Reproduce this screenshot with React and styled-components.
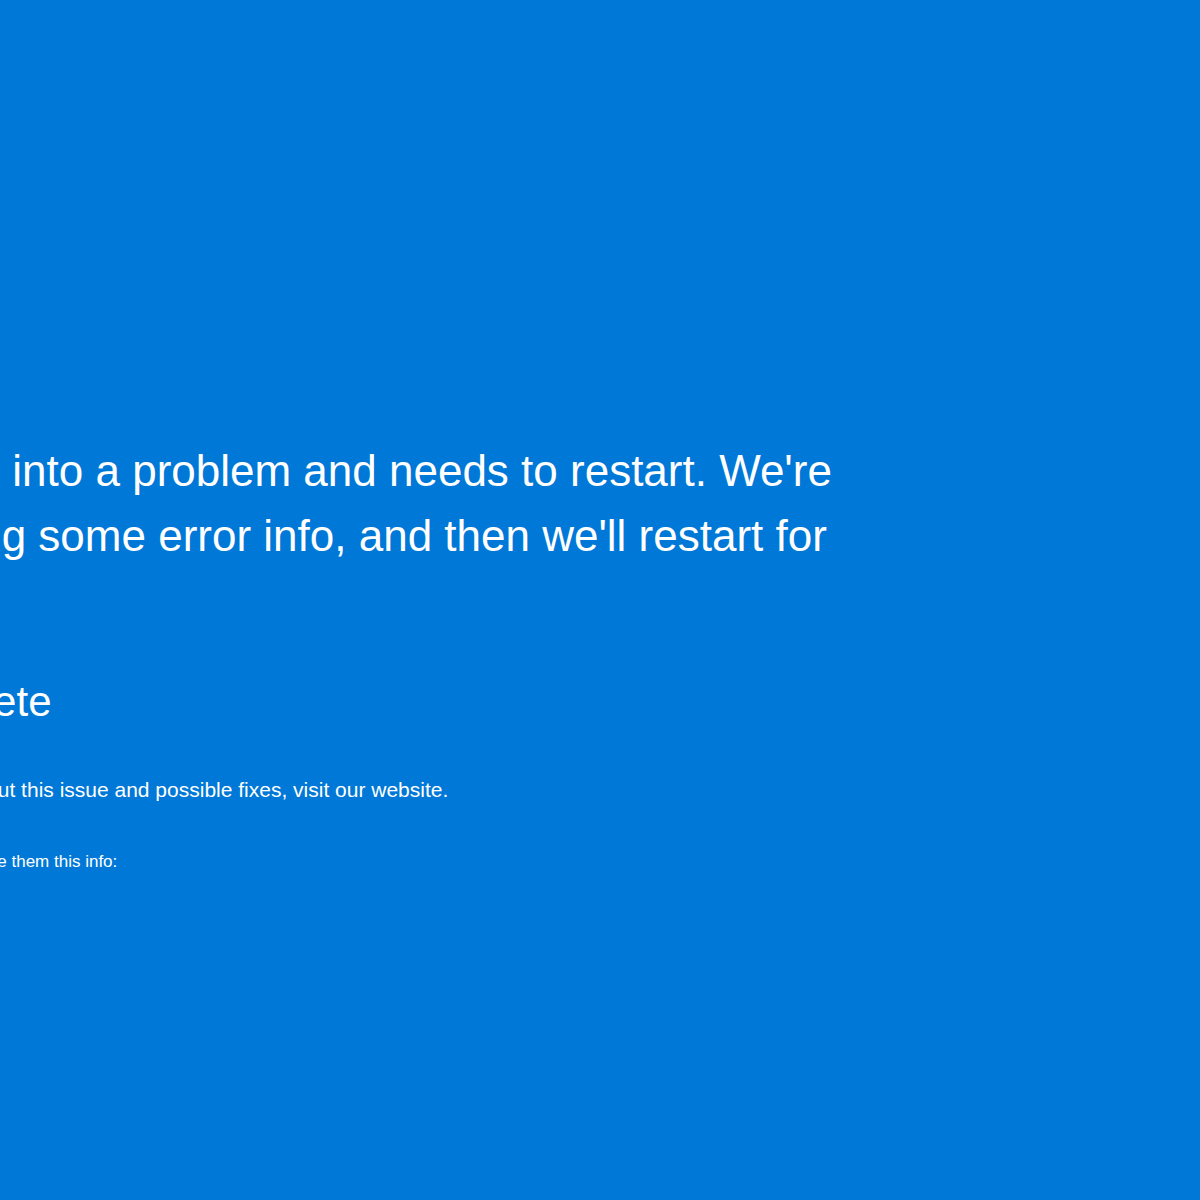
import styled, { createGlobalStyle } from 'styled-components';

const GlobalStyle = createGlobalStyle`
  html, body {
    margin: 0;
    padding: 0;
    background: #0078d7;
    overflow: hidden;
  }
`;

const Screen = styled.div`
  width: 1200px;
  height: 1200px;
  background: #0078d7;
  color: #ffffff;
  font-family: 'Liberation Sans', Arial, sans-serif;
  overflow: hidden;
`;

// the screen is cropped, so the column starts left of the viewport
const Content = styled.main`
  display: flex;
  flex-direction: column;
  width: 1100px;
  margin-left: -238px;
  padding-top: 438px;
`;

const Message = styled.p`
  margin: 0;
  width: 1100px;
  font-size: 44px;
  line-height: 65px;
`;

const Progress = styled.div`
  margin-top: 39px;
  font-size: 42px;
  line-height: 60px;
`;

const Info = styled.p`
  margin: ${(p) => p.$top}px 0 0;
  font-size: ${(p) => p.$size}px;
  line-height: 1.3;
`;

const App = () => {
  return (
    <>
      <GlobalStyle />
      <Screen>
        <Content>
          <Message>
            Your PC ran into a problem and needs to restart. We're just
            collecting some error info, and then we'll restart for you.
          </Message>
          <Progress>100% complete</Progress>
          <Info $top={44} $size={21}>
            For more information about this issue and possible fixes, visit our website.
          </Info>
          <Info $top={48} $size={17}>
            If you call a support person, give them this info:
          </Info>
        </Content>
      </Screen>
    </>
  );
};

export default App;
